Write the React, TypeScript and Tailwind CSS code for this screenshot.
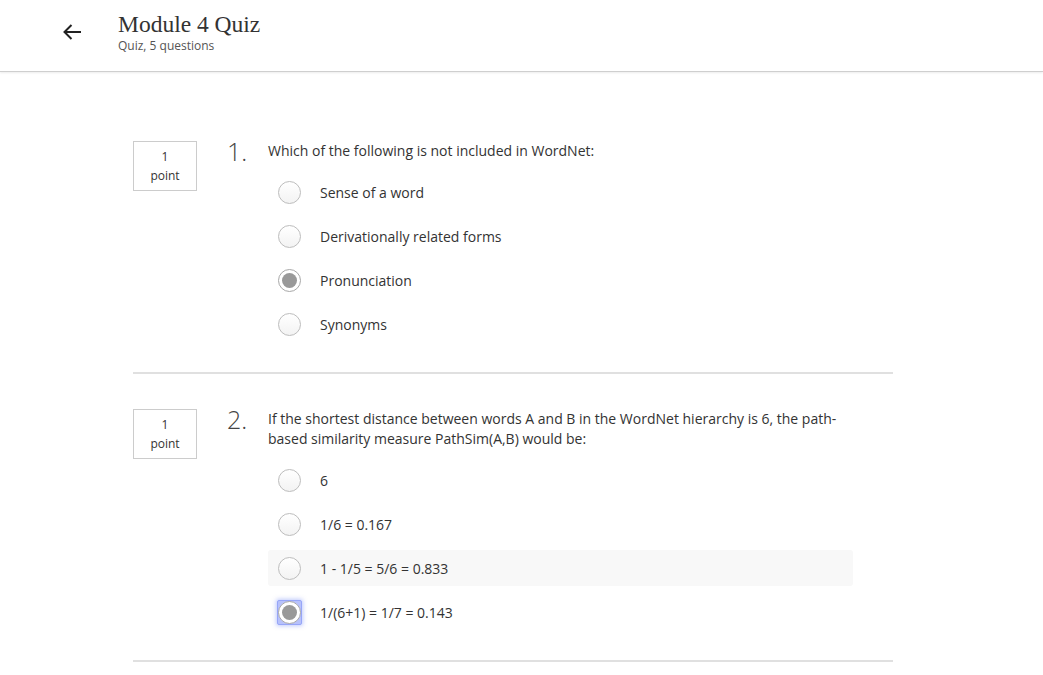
import React from "react";

type Opt = { label: string; selected?: boolean; focus?: boolean; hover?: boolean };

function Radio({ selected, focus }: { selected?: boolean; focus?: boolean }) {
  const circle = selected ? (
    <span className="flex h-[23px] w-[23px] items-center justify-center rounded-full border border-[#a8a8a8] bg-white">
      <span className="h-[15px] w-[15px] rounded-full bg-[#999999]" />
    </span>
  ) : (
    <span className="block h-[23px] w-[23px] rounded-full border border-[#bdbdbd] bg-gradient-to-b from-white to-[#f3f3f3]" />
  );
  if (focus) {
    return (
      <span className="flex h-[25px] w-[25px] items-center justify-center rounded-[2px] border border-[#97a6f8] bg-[#b7c1fb] shadow-[0_0_4px_1px_rgba(130,150,250,0.5)]">
        {circle}
      </span>
    );
  }
  return <span className="flex h-[25px] w-[25px] items-center justify-center">{circle}</span>;
}

function Question({
  n,
  lines,
  options,
}: {
  n: number;
  lines: string[];
  options: Opt[];
}) {
  return (
    <div className="flex flex-col">
      <div className="flex">
        <div className="flex h-[50px] w-[64px] shrink-0 flex-col items-center justify-center border border-[#cccccc] text-[12px] leading-[19px] text-[#333]">
          <span>1</span>
          <span>point</span>
        </div>
        <div className="ml-[30px] w-[41px] shrink-0 text-[25px] font-light leading-[20px] text-[#444]">
          {n}.
        </div>
        <div className="flex w-[585px] flex-col">
          <div className="text-[14px] leading-[20px] text-[#333]">
            {lines.map((l, i) => (
              <div key={i}>{l}</div>
            ))}
          </div>
          <div className="mt-[13px] flex flex-col gap-[8px]">
            {options.map((o, i) => (
              <div
                key={i}
                className={`flex h-[36px] items-center rounded-[3px] pl-[9px] ${o.hover ? "bg-[#f8f8f8]" : ""}`}
              >
                <Radio selected={o.selected} focus={o.focus} />
                <span className="ml-[18px] text-[14px] text-[#333]">{o.label}</span>
              </div>
            ))}
          </div>
        </div>
      </div>
      <div className="mt-[30px] h-[2px] w-[760px] bg-[#e0e0e0]" />
    </div>
  );
}

export default function App() {
  return (
    <div className="min-h-[675px] w-full bg-white" style={{ fontFamily: '"Open Sans", "Liberation Sans", sans-serif' }}>
      <header className="flex h-[72px] items-start border-b border-[#cfcfcf] shadow-[0_1px_2px_rgba(0,0,0,0.08)]">
        <div className="ml-[61px] mt-[22px] flex h-[20px] w-[22px] items-center justify-center text-[#222]">
          <svg width="20" height="18" viewBox="0 0 20 18" fill="none" stroke="currentColor" strokeWidth="2">
            <path d="M19 9H2.5" />
            <path d="M9.5 2L2.5 9l7 7" />
          </svg>
        </div>
        <div className="ml-[35px] mt-[9px] flex flex-col">
          <div
            className="text-[23.5px] leading-[30px] text-[#333]"
            style={{ fontFamily: '"Liberation Serif", "DejaVu Serif", serif' }}
          >
            Module 4 Quiz
          </div>
          <div className="-mt-[1px] text-[12px] leading-[16px] text-[#555]">Quiz, 5 questions</div>
        </div>
      </header>
      <main className="flex flex-col gap-[35px] pl-[133px] pt-[69px]">
        <Question
          n={1}
          lines={["Which of the following is not included in WordNet:"]}
          options={[
            { label: "Sense of a word" },
            { label: "Derivationally related forms" },
            { label: "Pronunciation", selected: true },
            { label: "Synonyms" },
          ]}
        />
        <Question
          n={2}
          lines={[
            "If the shortest distance between words A and B in the WordNet hierarchy is 6, the path-",
            "based similarity measure PathSim(A,B) would be:",
          ]}
          options={[
            { label: "6" },
            { label: "1/6 = 0.167" },
            { label: "1 - 1/5 = 5/6 = 0.833", hover: true },
            { label: "1/(6+1) = 1/7 = 0.143", selected: true, focus: true },
          ]}
        />
      </main>
    </div>
  );
}
